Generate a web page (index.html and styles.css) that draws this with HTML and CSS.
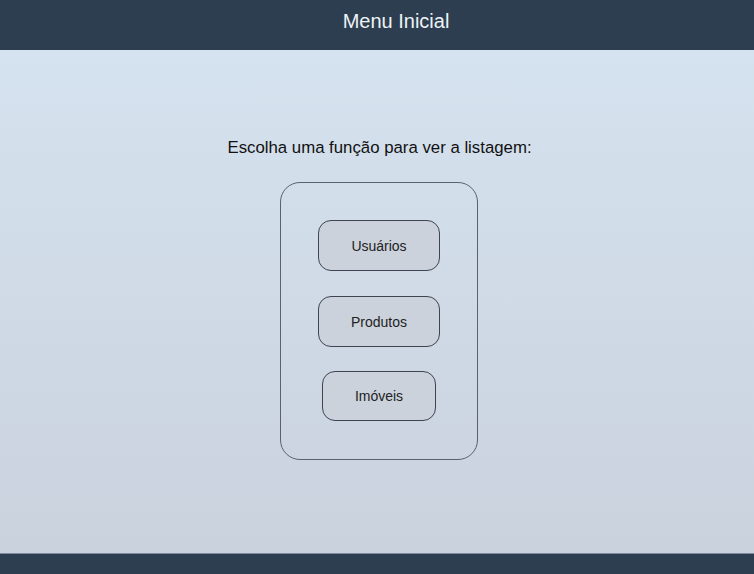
FILE: index.html
```html
<!DOCTYPE html>
<html lang="pt">
<head>
<meta charset="utf-8">
<title>Menu Inicial</title>
<link rel="stylesheet" href="styles.css">
</head>
<body>
<header class="topbar">
  <h1 class="topbar-title">Menu Inicial</h1>
</header>
<main class="content">
  <p class="prompt">Escolha uma função para ver a listagem:</p>
  <div class="card">
    <button class="menu-btn">Usuários</button>
    <button class="menu-btn">Produtos</button>
    <button class="menu-btn">Imóveis</button>
  </div>
</main>
<footer class="bottombar"></footer>
</body>
</html>
```
FILE: styles.css
```css
* { box-sizing: border-box; }
html, body { height: 100%; }
body {
  margin: 0;
  font-family: "Liberation Sans", Arial, sans-serif;
  display: flex;
  flex-direction: column;
  background: linear-gradient(to bottom, #d6e4f1, #c9d1dc);
}
.topbar {
  height: 50px;
  background: #2c3e50;
  display: flex;
  align-items: center;
  justify-content: center;
  flex-shrink: 0;
}
.topbar-title {
  margin: 0;
  font-size: 20px;
  font-weight: normal;
  color: #eef2f6;
  padding-left: 38px;
  padding-bottom: 8px;
}
.content {
  flex: 1;
  display: flex;
  flex-direction: column;
  align-items: center;
  padding-top: 88px;
  padding-left: 4px;
}
.prompt {
  margin: 0 0 24px 1px;
  font-size: 16.8px;
  color: #111;
  line-height: 20px;
}
.card {
  width: 198px;
  height: 278px;
  border: 1px solid #5a6270;
  border-radius: 20px;
  display: flex;
  flex-direction: column;
  align-items: center;
  padding-top: 37px;
  gap: 25px;
}
.menu-btn {
  height: 51px;
  padding: 0 32px;
  border: 1px solid #3e4450;
  border-radius: 13px;
  background: #cbd2dc;
  font-family: "Liberation Sans", Arial, sans-serif;
  font-size: 14px;
  color: #222;
}
.menu-btn + .menu-btn + .menu-btn {
  margin-top: -1px;
  height: 50px;
}
.bottombar {
  height: 21px;
  flex-shrink: 0;
  background: #2c3e50;
  border-top: 1px solid #7d8b9c;
}
```
